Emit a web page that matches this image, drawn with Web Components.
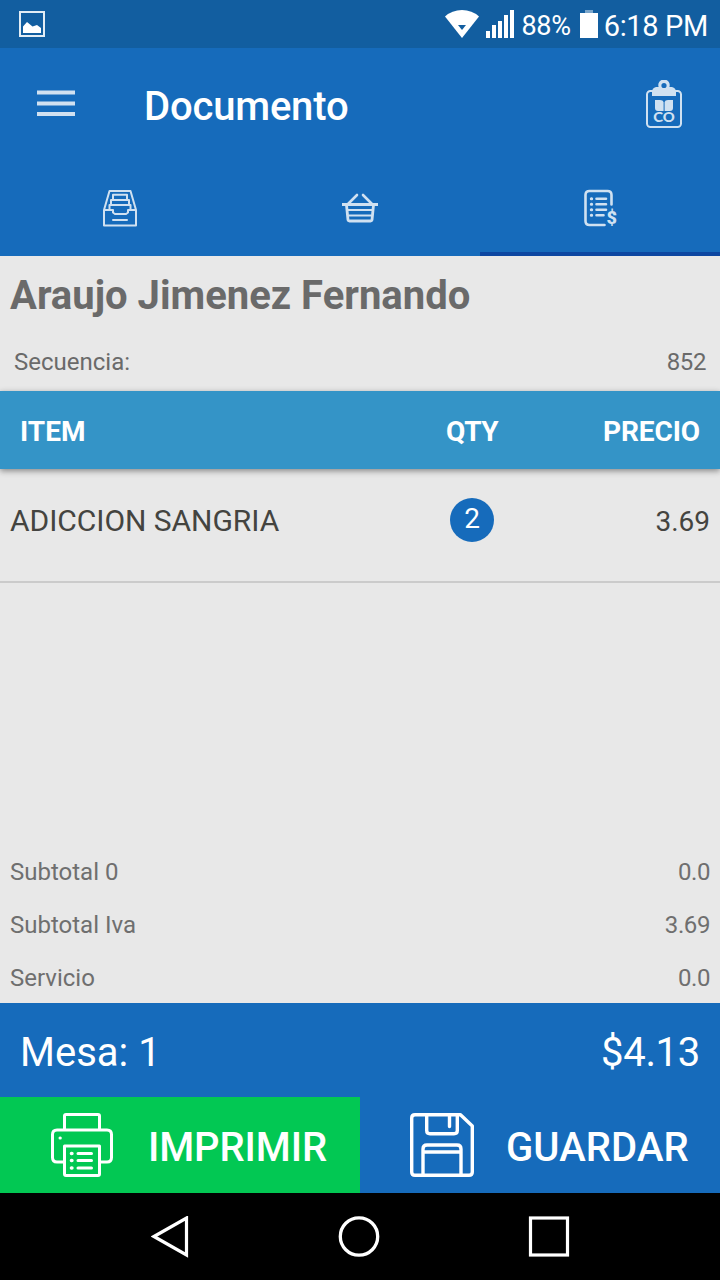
<!DOCTYPE html>
<html lang="es">
<head>
<meta charset="utf-8">
<title>Documento</title>
<style>
  html, body {
    margin: 0;
    height: 100%;
    overflow: hidden;
    background: #000;
    font-family: Roboto, "Noto Sans", sans-serif;
  }
</style>
</head>
<body>
<pos-screen>
  <status-bar slot="status" battery="88%" time="6:18 PM"></status-bar>
  <app-toolbar slot="toolbar">Documento</app-toolbar>
  <tab-strip slot="tabs" tabs='["tray", "basket", "invoice"]' active="2"></tab-strip>

  <client-header sequence="852">Araujo Jimenez Fernando</client-header>
  <items-header></items-header>
  <item-row qty="2" price="3.69">ADICCION SANGRIA</item-row>

  <total-line slot="totals" value="0.0">Subtotal 0</total-line>
  <total-line slot="totals" value="3.69">Subtotal Iva</total-line>
  <total-line slot="totals" value="0.0">Servicio</total-line>

  <table-total slot="footer" amount="$4.13">Mesa: 1</table-total>
  <action-button slot="actions" icon="printer" class="print">IMPRIMIR</action-button>
  <action-button slot="actions" icon="floppy" class="save">GUARDAR</action-button>
  <nav-bar slot="nav"></nav-bar>
</pos-screen>

<script>
const ICONS = {
  picture: [26, 26, `
    <rect x="1" y="1" width="24" height="24" fill="none" stroke="#e3edf5" stroke-width="2"/>
    <path d="M4 22V15.500L8 11L13.500 15.500L18 14L22 17V22Z" fill="#fff"/>`],
  wifi: [36, 30, `
    <path d="M1 7.500Q8 1 18 1Q28 1 35 7.500L18 29Z" fill="#fff"/>
    <path d="M14 16H22L18 21Z" fill="#125ea0"/>`],
  signal: [28, 28, `
    <path d="M0 21h4v7H0zM6 15h4v13H6zM12 11h4v17h-4zM18 5h4v23h-4zM24 0h4v28h-4z" fill="#fff"/>`],
  battery: [18, 28, `
    <rect x="5" y="0" width="8" height="3" fill="#7ba6cb"/>
    <rect x="0" y="3" width="18" height="25" fill="#fff"/>`],
  menu: [38, 28, `
    <path d="M0 2.500h38M0 13.500h38M0 24h38" stroke="#d1e1f1" stroke-width="4.200"/>`],
  clipboard: [36, 48, `
    <rect x="1" y="11" width="34" height="36" rx="3.500" fill="none" stroke="#d0e1f1" stroke-width="2"/>
    <path fill-rule="evenodd" fill="#d0e1f1" d="M6 16V12Q6 8 10 7H12.600A5.700 5.700 0 1 1 23.400 7H26Q30 8 30 12V16ZM18 2.900a2.600 2.600 0 1 0 0 5.200a2.600 2.600 0 1 0 0-5.200Z"/>
    <path d="M9 20h5q3 0 3.600 2v9h-5.600q-3 0-3-3ZM27 20h-5q-2.900 0-3.400 2v9h5.400q3 0 3-3Z" fill="#d0e1f1"/>
    <text x="18" y="42" text-anchor="middle" font-family="Lato" font-weight="900" font-size="14" textLength="21.500" lengthAdjust="spacingAndGlyphs" fill="#d0e1f1">CO</text>`],
  tray: [36, 38, `
    <g fill="none" stroke="#d0e1f1" stroke-width="2" stroke-linejoin="round" stroke-linecap="round">
      <path d="M2 21L7.500 2H28.500L34 21V36.500H2ZM2 21H11V23.500L13 25H24L26 23.500V21H34"/>
      <path d="M11 10V5.800H25V10M9 15V11H27V15M7.500 20.500V16H28.500V20.500M11 31H25"/>
    </g>`],
  basket: [36, 30, `
    <g fill="none" stroke="#d0e1f1" stroke-linejoin="round" stroke-linecap="round">
      <path d="M6 11L15 2M30 11L21 2" stroke-width="2.600"/>
      <path d="M0 11.500H36" stroke-width="3" stroke-linecap="butt"/>
      <path d="M4.500 12L6 27Q6.200 28 7.500 28H28.500Q29.800 28 30 27L31.500 12" stroke-width="2.800"/>
      <path d="M6 17H30M7 22.500H29" stroke-width="2"/>
    </g>`],
  invoice: [34, 38, `
    <g fill="none" stroke="#d0e1f1" stroke-width="2.600" stroke-linecap="round">
      <path d="M28.500 15.500V6Q28.500 2 24.500 2H6.500Q2.500 2 2.500 6V32Q2.500 36 6.500 36H21.500"/>
      <path d="M13.500 9.800H23M13.500 15.200H23M13.500 20.700H23M13.500 26.300H20.500"/>
      <path d="M8.300 9.800h.4M8.300 15.200h.4M8.300 20.700h.4M8.300 26.300h.4" stroke-width="3"/>
    </g>
    <text x="28.700" y="34.700" text-anchor="middle" font-family="Roboto" font-weight="900" font-size="18" fill="#d0e1f1">$</text>`],
  printer: [62, 64, `
    <g fill="none" stroke="#fff" stroke-width="3" stroke-linecap="round" stroke-linejoin="round">
      <path d="M13.500 16V3Q13.500 1.500 15 1.500H47Q48.500 1.500 48.500 3V16"/>
      <path d="M12 49H6Q1.500 49 1.500 44.500V21.500Q1.500 17 6 17H56Q60.500 17 60.500 21.500V44.500Q60.500 49 56 49H50"/>
      <path d="M13.500 33H48.500V61Q48.500 62.500 47 62.500H15Q13.500 62.500 13.500 61Z"/>
      <path d="M27 40.500H40.500M27 47.500H40.500M27 55H40.500"/>
      <path d="M20.500 40.500h.4M20.500 47.500h.4M20.500 55h.4" stroke-width="3.600"/>
      <path d="M9 25h.3" stroke-width="3"/>
    </g>`],
  floppy: [64, 64, `
    <g fill="none" stroke="#fff" stroke-width="3.400" stroke-linecap="round" stroke-linejoin="round">
      <path d="M5 1.700H50.500L62.300 13V59Q62.300 62.300 59 62.300H5Q1.700 62.300 1.700 59V5Q1.700 1.700 5 1.700Z"/>
      <path d="M16.700 2V17.500Q16.700 20.700 20 20.700H44Q47.300 20.700 47.300 17.500V2M39.500 3V13.500"/>
      <path d="M13 62V36Q13 32 17 32H47Q51 32 51 36V62M13 39H51"/>
    </g>`],
  back: [38, 42, `
    <path d="M3 20.500L35.500 2V39Z" fill="none" stroke="#fff" stroke-width="3.200"/>`],
  home: [42, 42, `
    <circle cx="21" cy="20.500" r="18.700" fill="none" stroke="#fff" stroke-width="3.300"/>`],
  recent: [42, 42, `
    <rect x="2.500" y="2" width="37" height="37" fill="none" stroke="#fff" stroke-width="3.200"/>`]
};

class PosIcon extends HTMLElement {
  constructor() {
    super();
    this.attachShadow({ mode: 'open' });
  }

  connectedCallback() {
    const [w, h, body] = ICONS[this.getAttribute('name')];
    this.shadowRoot.innerHTML = `
      <style>
        :host { display: block; flex: none; width: ${w}px; height: ${h}px; }
        svg { display: block; }
      </style>
      <svg width="${w}" height="${h}" viewBox="0 0 ${w} ${h}">${body}</svg>
    `;
  }
}

class PosScreen extends HTMLElement {
  constructor() {
    super();
    this.attachShadow({ mode: 'open' });
    this.shadowRoot.innerHTML = `
      <style>
        :host {
          display: flex;
          flex-direction: column;
          width: 720px;
          height: 1280px;
          background: #e8e8e8;
        }
        main { flex: 1; }
        .actions { display: grid; grid-template-columns: 1fr 1fr; height: 96px; }
      </style>
      <slot name="status"></slot>
      <slot name="toolbar"></slot>
      <slot name="tabs"></slot>
      <main><slot></slot></main>
      <slot name="totals"></slot>
      <slot name="footer"></slot>
      <div class="actions"><slot name="actions"></slot></div>
      <slot name="nav"></slot>
    `;
  }
}

class StatusBar extends HTMLElement {
  constructor() {
    super();
    this.attachShadow({ mode: 'open' });
  }

  connectedCallback() {
    this.shadowRoot.innerHTML = `
      <style>
        :host {
          display: flex;
          align-items: center;
          box-sizing: border-box;
          height: 48px;
          padding: 0 12px 0 19px;
          background: #125ea0;
          color: #fff;
          line-height: 48px;
          white-space: nowrap;
        }
        .spacer { flex: 1; }
        .signal { margin: 0 7px 0 6px; }
        .battery { margin: 0 6px 0 9px; }
        .level { padding-top: 3px; font-size: 27px; letter-spacing: -0.3px; }
        .time { padding-top: 3px; font-size: 29px; letter-spacing: -0.35px; }
      </style>
      <pos-icon name="picture"></pos-icon>
      <span class="spacer"></span>
      <pos-icon name="wifi"></pos-icon>
      <pos-icon class="signal" name="signal"></pos-icon>
      <span class="level">${this.getAttribute('battery')}</span>
      <pos-icon class="battery" name="battery"></pos-icon>
      <span class="time">${this.getAttribute('time')}</span>
    `;
  }
}

class AppToolbar extends HTMLElement {
  constructor() {
    super();
    this.attachShadow({ mode: 'open' });
    this.shadowRoot.innerHTML = `
      <style>
        :host {
          display: flex;
          align-items: center;
          box-sizing: border-box;
          height: 112px;
          padding: 0 38px 0 37px;
          background: #166bbb;
          color: #fff;
        }
        h1 {
          flex: 1;
          margin: 0 0 0 69px;
          padding-top: 6px;
          font-size: 40px;
          font-weight: 500;
          line-height: 48px;
          letter-spacing: -0.18px;
        }
      </style>
      <pos-icon name="menu"></pos-icon>
      <h1><slot></slot></h1>
      <pos-icon name="clipboard"></pos-icon>
    `;
  }
}

class TabStrip extends HTMLElement {
  constructor() {
    super();
    this.attachShadow({ mode: 'open' });
  }

  connectedCallback() {
    const tabs = JSON.parse(this.getAttribute('tabs')) || [];
    const active = Number(this.getAttribute('active'));
    this.shadowRoot.innerHTML = `
      <style>
        :host {
          display: grid;
          grid-template-columns: repeat(3, 1fr);
          height: 96px;
          background: #166bbb;
        }
        .tab {
          display: flex;
          align-items: center;
          justify-content: center;
          padding-top: 4px;
          border-bottom: 4px solid transparent;
        }
        .tab.active { border-bottom-color: #0d47a1; }
      </style>
      ${tabs.map((name, i) => `
        <div class="tab${i === active ? ' active' : ''}"><pos-icon name="${name}"></pos-icon></div>
      `).join('')}
    `;
  }
}

class ClientHeader extends HTMLElement {
  constructor() {
    super();
    this.attachShadow({ mode: 'open' });
  }

  connectedCallback() {
    this.shadowRoot.innerHTML = `
      <style>
        :host { display: block; height: 135px; color: #6a6a6a; }
        h2 {
          margin: 0;
          padding: 16px 10px 0;
          font-size: 40px;
          font-weight: 700;
          line-height: 48px;
        }
        .sequence {
          display: flex;
          justify-content: space-between;
          padding: 28px 14px 0;
          font-size: 24px;
          line-height: 28px;
        }
        .number { letter-spacing: -0.4px; }
      </style>
      <h2><slot></slot></h2>
      <div class="sequence"><span>Secuencia:</span><span class="number">${this.getAttribute('sequence')}</span></div>
    `;
  }
}

class ItemsHeader extends HTMLElement {
  constructor() {
    super();
    this.attachShadow({ mode: 'open' });
    this.shadowRoot.innerHTML = `
      <style>
        :host {
          display: grid;
          grid-template-columns: 1fr 140px 158px;
          align-items: center;
          box-sizing: border-box;
          height: 78px;
          padding: 2px 20px 0;
          background: #3494c7;
          color: #fff;
          font-size: 28px;
          font-weight: 700;
          box-shadow: 0 2px 6px rgba(0, 0, 0, 0.42);
        }
        .qty { text-align: center; letter-spacing: -0.5px; }
        .price { text-align: right; letter-spacing: -0.1px; }
      </style>
      <span>ITEM</span>
      <span class="qty">QTY</span>
      <span class="price">PRECIO</span>
    `;
  }
}

class ItemRow extends HTMLElement {
  constructor() {
    super();
    this.attachShadow({ mode: 'open' });
  }

  connectedCallback() {
    this.shadowRoot.innerHTML = `
      <style>
        :host {
          display: grid;
          grid-template-columns: 1fr 140px 168px;
          box-sizing: border-box;
          height: 114px;
          padding: 29px 10px 0;
          border-bottom: 2px solid #cbcbcb;
          color: #444440;
          line-height: 44px;
        }
        .name { padding-top: 1px; font-size: 30px; letter-spacing: -0.04px; }
        .badge {
          justify-self: center;
          width: 44px;
          height: 44px;
          border-radius: 50%;
          background: #166bbb;
          color: #fff;
          font-size: 28px;
          line-height: 41px;
          text-align: center;
        }
        .price { padding-top: 2px; font-size: 28px; text-align: right; }
      </style>
      <span class="name"><slot></slot></span>
      <span class="badge">${this.getAttribute('qty')}</span>
      <span class="price">${this.getAttribute('price')}</span>
    `;
  }
}

class TotalLine extends HTMLElement {
  constructor() {
    super();
    this.attachShadow({ mode: 'open' });
  }

  connectedCallback() {
    this.shadowRoot.innerHTML = `
      <style>
        :host {
          display: flex;
          justify-content: space-between;
          height: 53px;
          padding: 0 10px;
          color: #6f6f6f;
          font-size: 24px;
          line-height: 57px;
        }
        .value { letter-spacing: -0.4px; }
      </style>
      <span><slot></slot></span>
      <span class="value">${this.getAttribute('value')}</span>
    `;
  }
}

class TableTotal extends HTMLElement {
  constructor() {
    super();
    this.attachShadow({ mode: 'open' });
  }

  connectedCallback() {
    this.shadowRoot.innerHTML = `
      <style>
        :host {
          display: flex;
          justify-content: space-between;
          height: 94px;
          padding: 0 20px;
          background: #166bbb;
          color: #fff;
          font-size: 40px;
          line-height: 100px;
        }
        .amount { letter-spacing: -0.3px; }
      </style>
      <span><slot></slot></span>
      <span class="amount">${this.getAttribute('amount')}</span>
    `;
  }
}

class ActionButton extends HTMLElement {
  constructor() {
    super();
    this.attachShadow({ mode: 'open' });
  }

  connectedCallback() {
    this.shadowRoot.innerHTML = `
      <style>
        :host {
          display: flex;
          align-items: center;
          color: #fff;
          font-size: 40px;
          font-weight: 500;
        }
        :host(.print) { padding-left: 51px; gap: 35px; background: #02c853; letter-spacing: -0.1px; }
        :host(.save) { padding-left: 50px; gap: 32px; background: #166bbb; letter-spacing: 0.1px; }
        .label { padding-top: 4px; }
      </style>
      <pos-icon name="${this.getAttribute('icon')}"></pos-icon>
      <span class="label"><slot></slot></span>
    `;
  }
}

class NavBar extends HTMLElement {
  constructor() {
    super();
    this.attachShadow({ mode: 'open' });
    this.shadowRoot.innerHTML = `
      <style>
        :host {
          display: flex;
          align-items: center;
          justify-content: space-between;
          height: 87px;
          padding: 0 150px 0 151px;
          background: #000;
        }
      </style>
      <pos-icon name="back"></pos-icon>
      <pos-icon name="home"></pos-icon>
      <pos-icon name="recent"></pos-icon>
    `;
  }
}

customElements.define('pos-icon', PosIcon);
customElements.define('pos-screen', PosScreen);
customElements.define('status-bar', StatusBar);
customElements.define('app-toolbar', AppToolbar);
customElements.define('tab-strip', TabStrip);
customElements.define('client-header', ClientHeader);
customElements.define('items-header', ItemsHeader);
customElements.define('item-row', ItemRow);
customElements.define('total-line', TotalLine);
customElements.define('table-total', TableTotal);
customElements.define('action-button', ActionButton);
customElements.define('nav-bar', NavBar);
</script>
</body>
</html>
